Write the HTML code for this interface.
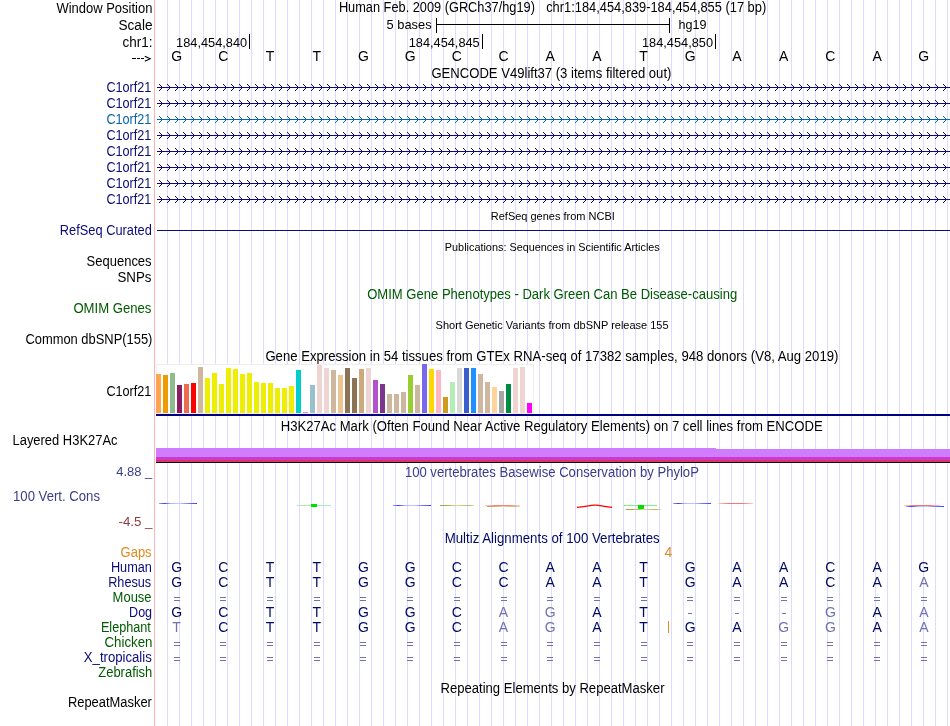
<!DOCTYPE html>
<html><head><meta charset="utf-8"><style>
html,body{margin:0;padding:0;background:#fff;width:950px;height:726px;overflow:hidden}
svg{display:block;will-change:transform}
text{font-family:"Liberation Sans", sans-serif}
</style></head><body>
<svg width="950" height="726" viewBox="0 0 950 726">
<defs><pattern id="chevN" x="154" y="0" width="8" height="7" patternUnits="userSpaceOnUse"><rect x="0" y="3" width="8" height="1" fill="#0c0c78"/><rect x="7" y="2" width="1" height="3" fill="#0c0c78"/><rect x="6" y="1" width="1" height="1" fill="#0c0c78"/><rect x="6" y="5" width="1" height="1" fill="#0c0c78"/><rect x="5" y="0" width="1" height="1" fill="#0c0c78"/><rect x="5" y="6" width="1" height="1" fill="#0c0c78"/></pattern><pattern id="chevB" x="154" y="0" width="8" height="7" patternUnits="userSpaceOnUse"><rect x="0" y="3" width="8" height="1" fill="#0a64a8"/><rect x="7" y="2" width="1" height="3" fill="#0a64a8"/><rect x="6" y="1" width="1" height="1" fill="#0a64a8"/><rect x="6" y="5" width="1" height="1" fill="#0a64a8"/><rect x="5" y="0" width="1" height="1" fill="#0a64a8"/><rect x="5" y="6" width="1" height="1" fill="#0a64a8"/></pattern><linearGradient id="gb1" x1="0" y1="0" x2="1" y2="0"><stop offset="0" stop-color="#a0a0ff"/><stop offset="0.15" stop-color="#3a3aff"/><stop offset="0.3" stop-color="#b0b0ff"/><stop offset="0.55" stop-color="#c8c8ff"/><stop offset="0.8" stop-color="#7070ff"/><stop offset="1" stop-color="#4040ff"/></linearGradient><linearGradient id="gr1" x1="0" y1="0" x2="1" y2="0"><stop offset="0" stop-color="#ffd0d0"/><stop offset="0.3" stop-color="#ff7070"/><stop offset="0.7" stop-color="#ff7070"/><stop offset="1" stop-color="#ffd0d0"/></linearGradient><linearGradient id="go1" x1="0" y1="0" x2="1" y2="0"><stop offset="0" stop-color="#a0a040"/><stop offset="0.2" stop-color="#b0b040"/><stop offset="0.5" stop-color="#d8d8a0"/><stop offset="0.85" stop-color="#b8b860"/><stop offset="1" stop-color="#e0e0b0"/></linearGradient><linearGradient id="gg1" x1="0" y1="0" x2="1" y2="0"><stop offset="0" stop-color="#c0f0c0"/><stop offset="1" stop-color="#b0f0b0"/></linearGradient></defs>
<rect x="0" y="0" width="950" height="726" fill="#fff"/>
<g shape-rendering="crispEdges">
<rect x="167" y="0" width="1" height="726" fill="#dcdcff"/>
<rect x="179" y="0" width="1" height="726" fill="#dcdcff"/>
<rect x="191" y="0" width="1" height="726" fill="#dcdcff"/>
<rect x="203" y="0" width="1" height="726" fill="#dcdcff"/>
<rect x="215" y="0" width="1" height="726" fill="#dcdcff"/>
<rect x="227" y="0" width="1" height="726" fill="#dcdcff"/>
<rect x="239" y="0" width="1" height="726" fill="#dcdcff"/>
<rect x="251" y="0" width="1" height="726" fill="#dcdcff"/>
<rect x="263" y="0" width="1" height="726" fill="#dcdcff"/>
<rect x="275" y="0" width="1" height="726" fill="#dcdcff"/>
<rect x="287" y="0" width="1" height="726" fill="#dcdcff"/>
<rect x="299" y="0" width="1" height="726" fill="#dcdcff"/>
<rect x="311" y="0" width="1" height="726" fill="#dcdcff"/>
<rect x="323" y="0" width="1" height="726" fill="#dcdcff"/>
<rect x="335" y="0" width="1" height="726" fill="#dcdcff"/>
<rect x="347" y="0" width="1" height="726" fill="#dcdcff"/>
<rect x="359" y="0" width="1" height="726" fill="#dcdcff"/>
<rect x="371" y="0" width="1" height="726" fill="#dcdcff"/>
<rect x="383" y="0" width="1" height="726" fill="#dcdcff"/>
<rect x="395" y="0" width="1" height="726" fill="#dcdcff"/>
<rect x="407" y="0" width="1" height="726" fill="#dcdcff"/>
<rect x="419" y="0" width="1" height="726" fill="#dcdcff"/>
<rect x="431" y="0" width="1" height="726" fill="#dcdcff"/>
<rect x="443" y="0" width="1" height="726" fill="#dcdcff"/>
<rect x="455" y="0" width="1" height="726" fill="#dcdcff"/>
<rect x="467" y="0" width="1" height="726" fill="#dcdcff"/>
<rect x="479" y="0" width="1" height="726" fill="#dcdcff"/>
<rect x="491" y="0" width="1" height="726" fill="#dcdcff"/>
<rect x="503" y="0" width="1" height="726" fill="#dcdcff"/>
<rect x="515" y="0" width="1" height="726" fill="#dcdcff"/>
<rect x="527" y="0" width="1" height="726" fill="#dcdcff"/>
<rect x="539" y="0" width="1" height="726" fill="#dcdcff"/>
<rect x="551" y="0" width="1" height="726" fill="#dcdcff"/>
<rect x="563" y="0" width="1" height="726" fill="#dcdcff"/>
<rect x="575" y="0" width="1" height="726" fill="#dcdcff"/>
<rect x="587" y="0" width="1" height="726" fill="#dcdcff"/>
<rect x="599" y="0" width="1" height="726" fill="#dcdcff"/>
<rect x="611" y="0" width="1" height="726" fill="#dcdcff"/>
<rect x="623" y="0" width="1" height="726" fill="#dcdcff"/>
<rect x="635" y="0" width="1" height="726" fill="#dcdcff"/>
<rect x="647" y="0" width="1" height="726" fill="#dcdcff"/>
<rect x="659" y="0" width="1" height="726" fill="#dcdcff"/>
<rect x="671" y="0" width="1" height="726" fill="#dcdcff"/>
<rect x="683" y="0" width="1" height="726" fill="#dcdcff"/>
<rect x="695" y="0" width="1" height="726" fill="#dcdcff"/>
<rect x="707" y="0" width="1" height="726" fill="#dcdcff"/>
<rect x="719" y="0" width="1" height="726" fill="#dcdcff"/>
<rect x="731" y="0" width="1" height="726" fill="#dcdcff"/>
<rect x="743" y="0" width="1" height="726" fill="#dcdcff"/>
<rect x="755" y="0" width="1" height="726" fill="#dcdcff"/>
<rect x="767" y="0" width="1" height="726" fill="#dcdcff"/>
<rect x="779" y="0" width="1" height="726" fill="#dcdcff"/>
<rect x="791" y="0" width="1" height="726" fill="#dcdcff"/>
<rect x="803" y="0" width="1" height="726" fill="#dcdcff"/>
<rect x="815" y="0" width="1" height="726" fill="#dcdcff"/>
<rect x="827" y="0" width="1" height="726" fill="#dcdcff"/>
<rect x="839" y="0" width="1" height="726" fill="#dcdcff"/>
<rect x="851" y="0" width="1" height="726" fill="#dcdcff"/>
<rect x="863" y="0" width="1" height="726" fill="#dcdcff"/>
<rect x="875" y="0" width="1" height="726" fill="#dcdcff"/>
<rect x="887" y="0" width="1" height="726" fill="#dcdcff"/>
<rect x="899" y="0" width="1" height="726" fill="#dcdcff"/>
<rect x="911" y="0" width="1" height="726" fill="#dcdcff"/>
<rect x="923" y="0" width="1" height="726" fill="#dcdcff"/>
<rect x="935" y="0" width="1" height="726" fill="#dcdcff"/>
<rect x="947" y="0" width="1" height="726" fill="#dcdcff"/>
<rect x="154" y="0" width="1" height="726" fill="#ffb4b4"/>
<rect x="436" y="18" width="1" height="15" fill="#000"/>
<rect x="436" y="24" width="234" height="1" fill="#000"/>
<rect x="669" y="18" width="1" height="15" fill="#000"/>
<rect x="249" y="34" width="1" height="15" fill="#000"/>
<rect x="482" y="34" width="1" height="15" fill="#000"/>
<rect x="715" y="34" width="1" height="15" fill="#000"/>
<text x="176.6" y="61" font-size="14" fill="#000" text-anchor="middle">G</text>
<text x="223.3" y="61" font-size="14" fill="#000" text-anchor="middle">C</text>
<text x="270.0" y="61" font-size="14" fill="#000" text-anchor="middle">T</text>
<text x="316.7" y="61" font-size="14" fill="#000" text-anchor="middle">T</text>
<text x="363.4" y="61" font-size="14" fill="#000" text-anchor="middle">G</text>
<text x="410.1" y="61" font-size="14" fill="#000" text-anchor="middle">G</text>
<text x="456.8" y="61" font-size="14" fill="#000" text-anchor="middle">C</text>
<text x="503.5" y="61" font-size="14" fill="#000" text-anchor="middle">C</text>
<text x="550.2" y="61" font-size="14" fill="#000" text-anchor="middle">A</text>
<text x="596.9" y="61" font-size="14" fill="#000" text-anchor="middle">A</text>
<text x="643.6" y="61" font-size="14" fill="#000" text-anchor="middle">T</text>
<text x="690.3" y="61" font-size="14" fill="#000" text-anchor="middle">G</text>
<text x="737.0" y="61" font-size="14" fill="#000" text-anchor="middle">A</text>
<text x="783.7" y="61" font-size="14" fill="#000" text-anchor="middle">A</text>
<text x="830.4" y="61" font-size="14" fill="#000" text-anchor="middle">C</text>
<text x="877.1" y="61" font-size="14" fill="#000" text-anchor="middle">A</text>
<text x="923.8" y="61" font-size="14" fill="#000" text-anchor="middle">G</text>
<g transform="translate(0,84)"><rect x="157" y="0" width="793" height="7" fill="url(#chevN)"/></g>
<g transform="translate(0,100)"><rect x="157" y="0" width="793" height="7" fill="url(#chevN)"/></g>
<g transform="translate(0,116)"><rect x="157" y="0" width="793" height="7" fill="url(#chevB)"/></g>
<g transform="translate(0,132)"><rect x="157" y="0" width="793" height="7" fill="url(#chevN)"/></g>
<g transform="translate(0,148)"><rect x="157" y="0" width="793" height="7" fill="url(#chevN)"/></g>
<g transform="translate(0,164)"><rect x="157" y="0" width="793" height="7" fill="url(#chevN)"/></g>
<g transform="translate(0,180)"><rect x="157" y="0" width="793" height="7" fill="url(#chevN)"/></g>
<g transform="translate(0,196)"><rect x="157" y="0" width="793" height="7" fill="url(#chevN)"/></g>
<rect x="157" y="230" width="793" height="1" fill="#0c0c78"/>
<rect x="156" y="364" width="378" height="50" fill="#eeeeee"/>
<rect x="157" y="365" width="376" height="48" fill="#ffffff"/>
<rect x="156" y="374" width="5" height="39" fill="#FFA54F"/>
<rect x="163" y="375" width="5" height="38" fill="#EE9A00"/>
<rect x="170" y="373" width="5" height="40" fill="#8FBC8F"/>
<rect x="177" y="385" width="5" height="28" fill="#8B1C62"/>
<rect x="184" y="384" width="5" height="29" fill="#EE6A50"/>
<rect x="191" y="383" width="5" height="30" fill="#FF0000"/>
<rect x="198" y="367" width="5" height="46" fill="#CDB79E"/>
<rect x="205" y="378" width="5" height="35" fill="#EEEE00"/>
<rect x="212" y="373" width="5" height="40" fill="#EEEE00"/>
<rect x="219" y="384" width="5" height="29" fill="#EEEE00"/>
<rect x="226" y="368" width="5" height="45" fill="#EEEE00"/>
<rect x="233" y="369" width="5" height="44" fill="#EEEE00"/>
<rect x="240" y="374" width="5" height="39" fill="#EEEE00"/>
<rect x="247" y="373" width="5" height="40" fill="#EEEE00"/>
<rect x="254" y="382" width="5" height="31" fill="#EEEE00"/>
<rect x="261" y="383" width="5" height="30" fill="#EEEE00"/>
<rect x="268" y="383" width="5" height="30" fill="#EEEE00"/>
<rect x="275" y="388" width="5" height="25" fill="#EEEE00"/>
<rect x="282" y="388" width="5" height="25" fill="#EEEE00"/>
<rect x="289" y="386" width="5" height="27" fill="#EEEE00"/>
<rect x="296" y="370" width="5" height="43" fill="#00CDCD"/>
<rect x="303" y="412" width="5" height="1" fill="#EE82EE"/>
<rect x="310" y="385" width="5" height="28" fill="#9AC0CD"/>
<rect x="317" y="365" width="5" height="48" fill="#EED5D2"/>
<rect x="324" y="368" width="5" height="45" fill="#EED5D2"/>
<rect x="331" y="370" width="5" height="43" fill="#CDB79E"/>
<rect x="338" y="375" width="5" height="38" fill="#EEC591"/>
<rect x="345" y="368" width="5" height="45" fill="#8B7355"/>
<rect x="352" y="378" width="5" height="35" fill="#8B7355"/>
<rect x="359" y="369" width="5" height="44" fill="#CDAA7D"/>
<rect x="366" y="368" width="5" height="45" fill="#EED5D2"/>
<rect x="373" y="380" width="5" height="33" fill="#B452CD"/>
<rect x="380" y="384" width="5" height="29" fill="#7A378B"/>
<rect x="387" y="394" width="5" height="19" fill="#CDB79E"/>
<rect x="394" y="394" width="5" height="19" fill="#CDB79E"/>
<rect x="401" y="392" width="5" height="21" fill="#CDB79E"/>
<rect x="408" y="375" width="5" height="38" fill="#9ACD32"/>
<rect x="415" y="385" width="5" height="28" fill="#CDB79E"/>
<rect x="422" y="364" width="5" height="49" fill="#7A67EE"/>
<rect x="429" y="369" width="5" height="44" fill="#FFD700"/>
<rect x="436" y="370" width="5" height="43" fill="#FFB6C1"/>
<rect x="443" y="397" width="5" height="16" fill="#CD9B1D"/>
<rect x="450" y="382" width="5" height="31" fill="#B4EEB4"/>
<rect x="457" y="368" width="5" height="45" fill="#D9D9D9"/>
<rect x="464" y="368" width="5" height="45" fill="#3A5FCD"/>
<rect x="471" y="368" width="5" height="45" fill="#1E90FF"/>
<rect x="478" y="374" width="5" height="39" fill="#CDB79E"/>
<rect x="485" y="382" width="5" height="31" fill="#CDB79E"/>
<rect x="492" y="387" width="5" height="26" fill="#FFD39B"/>
<rect x="499" y="391" width="5" height="22" fill="#A6A6A6"/>
<rect x="506" y="384" width="5" height="29" fill="#008B45"/>
<rect x="513" y="368" width="5" height="45" fill="#EED5D2"/>
<rect x="520" y="367" width="5" height="46" fill="#EED5D2"/>
<rect x="527" y="403" width="5" height="10" fill="#FF00FF"/>
<rect x="156" y="414" width="794" height="2" fill="#000080"/>
<rect x="156" y="448" width="560" height="9" fill="#d07cff"/>
<rect x="716" y="449" width="234" height="8" fill="#d07cff"/>
<rect x="156" y="457" width="794" height="3" fill="#cc3acc"/>
<rect x="156" y="460" width="794" height="2" fill="#d83860"/>
<rect x="156" y="462" width="794" height="1" fill="#100030"/>
<rect x="159" y="503" width="38" height="1.0" fill="url(#gb1)" shape-rendering="auto"/>
<rect x="297" y="505" width="34" height="1.0" fill="#a8f0a8" shape-rendering="auto"/>
<rect x="311" y="504" width="6" height="3" fill="#00e000"/>
<rect x="393" y="505" width="38" height="1.0" fill="url(#gb1)" shape-rendering="auto"/>
<rect x="440" y="505" width="34" height="1.0" fill="url(#go1)" shape-rendering="auto"/>
<rect x="485" y="505" width="35" height="0.9" fill="url(#gr1)" shape-rendering="auto"/>
<rect x="487" y="506" width="33" height="0.9" fill="url(#go1)" shape-rendering="auto"/>
<path d="M577 507.3 C585 507 590 505 595 505.2 C600 505 605 507 612 507.3" stroke="#ff0000" stroke-width="1.3" fill="none" shape-rendering="auto"/>
<rect x="624" y="505" width="33" height="1.0" fill="#80f080" shape-rendering="auto"/>
<rect x="638" y="505" width="6" height="4" fill="#00e000"/>
<rect x="626" y="509" width="35" height="1.0" fill="url(#go1)" shape-rendering="auto"/>
<rect x="673" y="503" width="38" height="1.0" fill="url(#gb1)" shape-rendering="auto"/>
<rect x="718" y="503" width="35" height="1.0" fill="url(#gr1)" shape-rendering="auto"/>
<rect x="904" y="505" width="36" height="1.0" fill="url(#gr1)" shape-rendering="auto"/>
<rect x="906" y="506" width="38" height="1.0" fill="url(#gb1)" shape-rendering="auto"/>
<text x="668.5" y="557" font-size="14" fill="#e08a1e" text-anchor="middle">4</text>
<text x="176.6" y="572" font-size="14" fill="#000a64" text-anchor="middle">G</text>
<text x="223.3" y="572" font-size="14" fill="#000a64" text-anchor="middle">C</text>
<text x="270.0" y="572" font-size="14" fill="#000a64" text-anchor="middle">T</text>
<text x="316.7" y="572" font-size="14" fill="#000a64" text-anchor="middle">T</text>
<text x="363.4" y="572" font-size="14" fill="#000a64" text-anchor="middle">G</text>
<text x="410.1" y="572" font-size="14" fill="#000a64" text-anchor="middle">G</text>
<text x="456.8" y="572" font-size="14" fill="#000a64" text-anchor="middle">C</text>
<text x="503.5" y="572" font-size="14" fill="#000a64" text-anchor="middle">C</text>
<text x="550.2" y="572" font-size="14" fill="#000a64" text-anchor="middle">A</text>
<text x="596.9" y="572" font-size="14" fill="#000a64" text-anchor="middle">A</text>
<text x="643.6" y="572" font-size="14" fill="#000a64" text-anchor="middle">T</text>
<text x="690.3" y="572" font-size="14" fill="#000a64" text-anchor="middle">G</text>
<text x="737.0" y="572" font-size="14" fill="#000a64" text-anchor="middle">A</text>
<text x="783.7" y="572" font-size="14" fill="#000a64" text-anchor="middle">A</text>
<text x="830.4" y="572" font-size="14" fill="#000a64" text-anchor="middle">C</text>
<text x="877.1" y="572" font-size="14" fill="#000a64" text-anchor="middle">A</text>
<text x="923.8" y="572" font-size="14" fill="#000a64" text-anchor="middle">G</text>
<text x="176.6" y="587" font-size="14" fill="#000a64" text-anchor="middle">G</text>
<text x="223.3" y="587" font-size="14" fill="#000a64" text-anchor="middle">C</text>
<text x="270.0" y="587" font-size="14" fill="#000a64" text-anchor="middle">T</text>
<text x="316.7" y="587" font-size="14" fill="#000a64" text-anchor="middle">T</text>
<text x="363.4" y="587" font-size="14" fill="#000a64" text-anchor="middle">G</text>
<text x="410.1" y="587" font-size="14" fill="#000a64" text-anchor="middle">G</text>
<text x="456.8" y="587" font-size="14" fill="#000a64" text-anchor="middle">C</text>
<text x="503.5" y="587" font-size="14" fill="#000a64" text-anchor="middle">C</text>
<text x="550.2" y="587" font-size="14" fill="#000a64" text-anchor="middle">A</text>
<text x="596.9" y="587" font-size="14" fill="#000a64" text-anchor="middle">A</text>
<text x="643.6" y="587" font-size="14" fill="#000a64" text-anchor="middle">T</text>
<text x="690.3" y="587" font-size="14" fill="#000a64" text-anchor="middle">G</text>
<text x="737.0" y="587" font-size="14" fill="#000a64" text-anchor="middle">A</text>
<text x="783.7" y="587" font-size="14" fill="#000a64" text-anchor="middle">A</text>
<text x="830.4" y="587" font-size="14" fill="#000a64" text-anchor="middle">C</text>
<text x="877.1" y="587" font-size="14" fill="#000a64" text-anchor="middle">A</text>
<text x="923.8" y="587" font-size="14" fill="#7272b0" text-anchor="middle">A</text>
<rect x="174" y="597" width="6" height="1" fill="#7272b0"/>
<rect x="174" y="600" width="6" height="1" fill="#7272b0"/>
<rect x="220" y="597" width="6" height="1" fill="#7272b0"/>
<rect x="220" y="600" width="6" height="1" fill="#7272b0"/>
<rect x="267" y="597" width="6" height="1" fill="#7272b0"/>
<rect x="267" y="600" width="6" height="1" fill="#7272b0"/>
<rect x="314" y="597" width="6" height="1" fill="#7272b0"/>
<rect x="314" y="600" width="6" height="1" fill="#7272b0"/>
<rect x="360" y="597" width="6" height="1" fill="#7272b0"/>
<rect x="360" y="600" width="6" height="1" fill="#7272b0"/>
<rect x="407" y="597" width="6" height="1" fill="#7272b0"/>
<rect x="407" y="600" width="6" height="1" fill="#7272b0"/>
<rect x="454" y="597" width="6" height="1" fill="#7272b0"/>
<rect x="454" y="600" width="6" height="1" fill="#7272b0"/>
<rect x="501" y="597" width="6" height="1" fill="#7272b0"/>
<rect x="501" y="600" width="6" height="1" fill="#7272b0"/>
<rect x="547" y="597" width="6" height="1" fill="#7272b0"/>
<rect x="547" y="600" width="6" height="1" fill="#7272b0"/>
<rect x="594" y="597" width="6" height="1" fill="#7272b0"/>
<rect x="594" y="600" width="6" height="1" fill="#7272b0"/>
<rect x="641" y="597" width="6" height="1" fill="#7272b0"/>
<rect x="641" y="600" width="6" height="1" fill="#7272b0"/>
<rect x="687" y="597" width="6" height="1" fill="#7272b0"/>
<rect x="687" y="600" width="6" height="1" fill="#7272b0"/>
<rect x="734" y="597" width="6" height="1" fill="#7272b0"/>
<rect x="734" y="600" width="6" height="1" fill="#7272b0"/>
<rect x="781" y="597" width="6" height="1" fill="#7272b0"/>
<rect x="781" y="600" width="6" height="1" fill="#7272b0"/>
<rect x="827" y="597" width="6" height="1" fill="#7272b0"/>
<rect x="827" y="600" width="6" height="1" fill="#7272b0"/>
<rect x="874" y="597" width="6" height="1" fill="#7272b0"/>
<rect x="874" y="600" width="6" height="1" fill="#7272b0"/>
<rect x="921" y="597" width="6" height="1" fill="#7272b0"/>
<rect x="921" y="600" width="6" height="1" fill="#7272b0"/>
<text x="176.6" y="617" font-size="14" fill="#000a64" text-anchor="middle">G</text>
<text x="223.3" y="617" font-size="14" fill="#000a64" text-anchor="middle">C</text>
<text x="270.0" y="617" font-size="14" fill="#000a64" text-anchor="middle">T</text>
<text x="316.7" y="617" font-size="14" fill="#000a64" text-anchor="middle">T</text>
<text x="363.4" y="617" font-size="14" fill="#000a64" text-anchor="middle">G</text>
<text x="410.1" y="617" font-size="14" fill="#000a64" text-anchor="middle">G</text>
<text x="456.8" y="617" font-size="14" fill="#000a64" text-anchor="middle">C</text>
<text x="503.5" y="617" font-size="14" fill="#7272b0" text-anchor="middle">A</text>
<text x="550.2" y="617" font-size="14" fill="#7272b0" text-anchor="middle">G</text>
<text x="596.9" y="617" font-size="14" fill="#000a64" text-anchor="middle">A</text>
<text x="643.6" y="617" font-size="14" fill="#000a64" text-anchor="middle">T</text>
<rect x="688" y="613" width="4" height="1" fill="#7272b0"/>
<rect x="735" y="613" width="4" height="1" fill="#7272b0"/>
<rect x="782" y="613" width="4" height="1" fill="#7272b0"/>
<text x="830.4" y="617" font-size="14" fill="#7272b0" text-anchor="middle">G</text>
<text x="877.1" y="617" font-size="14" fill="#000a64" text-anchor="middle">A</text>
<text x="923.8" y="617" font-size="14" fill="#7272b0" text-anchor="middle">A</text>
<text x="176.6" y="632" font-size="14" fill="#7272b0" text-anchor="middle">T</text>
<text x="223.3" y="632" font-size="14" fill="#000a64" text-anchor="middle">C</text>
<text x="270.0" y="632" font-size="14" fill="#000a64" text-anchor="middle">T</text>
<text x="316.7" y="632" font-size="14" fill="#000a64" text-anchor="middle">T</text>
<text x="363.4" y="632" font-size="14" fill="#000a64" text-anchor="middle">G</text>
<text x="410.1" y="632" font-size="14" fill="#000a64" text-anchor="middle">G</text>
<text x="456.8" y="632" font-size="14" fill="#000a64" text-anchor="middle">C</text>
<text x="503.5" y="632" font-size="14" fill="#7272b0" text-anchor="middle">A</text>
<text x="550.2" y="632" font-size="14" fill="#7272b0" text-anchor="middle">G</text>
<text x="596.9" y="632" font-size="14" fill="#000a64" text-anchor="middle">A</text>
<text x="643.6" y="632" font-size="14" fill="#000a64" text-anchor="middle">T</text>
<text x="690.3" y="632" font-size="14" fill="#000a64" text-anchor="middle">G</text>
<text x="737.0" y="632" font-size="14" fill="#000a64" text-anchor="middle">A</text>
<text x="783.7" y="632" font-size="14" fill="#7272b0" text-anchor="middle">G</text>
<text x="830.4" y="632" font-size="14" fill="#7272b0" text-anchor="middle">G</text>
<text x="877.1" y="632" font-size="14" fill="#000a64" text-anchor="middle">A</text>
<text x="923.8" y="632" font-size="14" fill="#7272b0" text-anchor="middle">A</text>
<rect x="174" y="642" width="6" height="1" fill="#7272b0"/>
<rect x="174" y="645" width="6" height="1" fill="#7272b0"/>
<rect x="220" y="642" width="6" height="1" fill="#7272b0"/>
<rect x="220" y="645" width="6" height="1" fill="#7272b0"/>
<rect x="267" y="642" width="6" height="1" fill="#7272b0"/>
<rect x="267" y="645" width="6" height="1" fill="#7272b0"/>
<rect x="314" y="642" width="6" height="1" fill="#7272b0"/>
<rect x="314" y="645" width="6" height="1" fill="#7272b0"/>
<rect x="360" y="642" width="6" height="1" fill="#7272b0"/>
<rect x="360" y="645" width="6" height="1" fill="#7272b0"/>
<rect x="407" y="642" width="6" height="1" fill="#7272b0"/>
<rect x="407" y="645" width="6" height="1" fill="#7272b0"/>
<rect x="454" y="642" width="6" height="1" fill="#7272b0"/>
<rect x="454" y="645" width="6" height="1" fill="#7272b0"/>
<rect x="501" y="642" width="6" height="1" fill="#7272b0"/>
<rect x="501" y="645" width="6" height="1" fill="#7272b0"/>
<rect x="547" y="642" width="6" height="1" fill="#7272b0"/>
<rect x="547" y="645" width="6" height="1" fill="#7272b0"/>
<rect x="594" y="642" width="6" height="1" fill="#7272b0"/>
<rect x="594" y="645" width="6" height="1" fill="#7272b0"/>
<rect x="641" y="642" width="6" height="1" fill="#7272b0"/>
<rect x="641" y="645" width="6" height="1" fill="#7272b0"/>
<rect x="687" y="642" width="6" height="1" fill="#7272b0"/>
<rect x="687" y="645" width="6" height="1" fill="#7272b0"/>
<rect x="734" y="642" width="6" height="1" fill="#7272b0"/>
<rect x="734" y="645" width="6" height="1" fill="#7272b0"/>
<rect x="781" y="642" width="6" height="1" fill="#7272b0"/>
<rect x="781" y="645" width="6" height="1" fill="#7272b0"/>
<rect x="827" y="642" width="6" height="1" fill="#7272b0"/>
<rect x="827" y="645" width="6" height="1" fill="#7272b0"/>
<rect x="874" y="642" width="6" height="1" fill="#7272b0"/>
<rect x="874" y="645" width="6" height="1" fill="#7272b0"/>
<rect x="921" y="642" width="6" height="1" fill="#7272b0"/>
<rect x="921" y="645" width="6" height="1" fill="#7272b0"/>
<rect x="174" y="657" width="6" height="1" fill="#7272b0"/>
<rect x="174" y="660" width="6" height="1" fill="#7272b0"/>
<rect x="220" y="657" width="6" height="1" fill="#7272b0"/>
<rect x="220" y="660" width="6" height="1" fill="#7272b0"/>
<rect x="267" y="657" width="6" height="1" fill="#7272b0"/>
<rect x="267" y="660" width="6" height="1" fill="#7272b0"/>
<rect x="314" y="657" width="6" height="1" fill="#7272b0"/>
<rect x="314" y="660" width="6" height="1" fill="#7272b0"/>
<rect x="360" y="657" width="6" height="1" fill="#7272b0"/>
<rect x="360" y="660" width="6" height="1" fill="#7272b0"/>
<rect x="407" y="657" width="6" height="1" fill="#7272b0"/>
<rect x="407" y="660" width="6" height="1" fill="#7272b0"/>
<rect x="454" y="657" width="6" height="1" fill="#7272b0"/>
<rect x="454" y="660" width="6" height="1" fill="#7272b0"/>
<rect x="501" y="657" width="6" height="1" fill="#7272b0"/>
<rect x="501" y="660" width="6" height="1" fill="#7272b0"/>
<rect x="547" y="657" width="6" height="1" fill="#7272b0"/>
<rect x="547" y="660" width="6" height="1" fill="#7272b0"/>
<rect x="594" y="657" width="6" height="1" fill="#7272b0"/>
<rect x="594" y="660" width="6" height="1" fill="#7272b0"/>
<rect x="641" y="657" width="6" height="1" fill="#7272b0"/>
<rect x="641" y="660" width="6" height="1" fill="#7272b0"/>
<rect x="687" y="657" width="6" height="1" fill="#7272b0"/>
<rect x="687" y="660" width="6" height="1" fill="#7272b0"/>
<rect x="734" y="657" width="6" height="1" fill="#7272b0"/>
<rect x="734" y="660" width="6" height="1" fill="#7272b0"/>
<rect x="781" y="657" width="6" height="1" fill="#7272b0"/>
<rect x="781" y="660" width="6" height="1" fill="#7272b0"/>
<rect x="827" y="657" width="6" height="1" fill="#7272b0"/>
<rect x="827" y="660" width="6" height="1" fill="#7272b0"/>
<rect x="874" y="657" width="6" height="1" fill="#7272b0"/>
<rect x="874" y="660" width="6" height="1" fill="#7272b0"/>
<rect x="921" y="657" width="6" height="1" fill="#7272b0"/>
<rect x="921" y="660" width="6" height="1" fill="#7272b0"/>
<rect x="668" y="621" width="1" height="12" fill="#e08a1e"/>
<text x="56.40" y="13" font-size="14" fill="#000" textLength="96.00" lengthAdjust="spacingAndGlyphs">Window Position</text>
<text x="338.90" y="12" font-size="14" fill="#000" textLength="196.00" lengthAdjust="spacingAndGlyphs">Human Feb. 2009 (GRCh37/hg19)</text>
<text x="546.20" y="12" font-size="14" fill="#000" textLength="220.00" lengthAdjust="spacingAndGlyphs">chr1:184,454,839-184,454,855 (17 bp)</text>
<text x="118.50" y="30" font-size="14" fill="#000" textLength="34.00" lengthAdjust="spacingAndGlyphs">Scale</text>
<text x="386.60" y="29" font-size="13" fill="#000" textLength="45.00" lengthAdjust="spacingAndGlyphs">5 bases</text>
<text x="678.60" y="29" font-size="13" fill="#000" textLength="28.00" lengthAdjust="spacingAndGlyphs">hg19</text>
<text x="122.40" y="47" font-size="14" fill="#000" textLength="30.00" lengthAdjust="spacingAndGlyphs">chr1:</text>
<text x="176.10" y="47" font-size="13" fill="#000" textLength="71.00" lengthAdjust="spacingAndGlyphs">184,454,840</text>
<text x="408.70" y="47" font-size="13" fill="#000" textLength="71.00" lengthAdjust="spacingAndGlyphs">184,454,845</text>
<text x="642.00" y="47" font-size="13" fill="#000" textLength="71.00" lengthAdjust="spacingAndGlyphs">184,454,850</text>
<text x="431.40" y="78" font-size="14" fill="#000" textLength="240.00" lengthAdjust="spacingAndGlyphs">GENCODE V49lift37 (3 items filtered out)</text>
<text x="106.40" y="92" font-size="14" fill="#0c0c78" textLength="45.00" lengthAdjust="spacingAndGlyphs">C1orf21</text>
<text x="106.40" y="108" font-size="14" fill="#0c0c78" textLength="45.00" lengthAdjust="spacingAndGlyphs">C1orf21</text>
<text x="106.40" y="124" font-size="14" fill="#0a64a8" textLength="45.00" lengthAdjust="spacingAndGlyphs">C1orf21</text>
<text x="106.40" y="140" font-size="14" fill="#0c0c78" textLength="45.00" lengthAdjust="spacingAndGlyphs">C1orf21</text>
<text x="106.40" y="156" font-size="14" fill="#0c0c78" textLength="45.00" lengthAdjust="spacingAndGlyphs">C1orf21</text>
<text x="106.40" y="172" font-size="14" fill="#0c0c78" textLength="45.00" lengthAdjust="spacingAndGlyphs">C1orf21</text>
<text x="106.40" y="188" font-size="14" fill="#0c0c78" textLength="45.00" lengthAdjust="spacingAndGlyphs">C1orf21</text>
<text x="106.40" y="204" font-size="14" fill="#0c0c78" textLength="45.00" lengthAdjust="spacingAndGlyphs">C1orf21</text>
<text x="490.80" y="220" font-size="11.5" fill="#000" textLength="124.00" lengthAdjust="spacingAndGlyphs">RefSeq genes from NCBI</text>
<text x="59.80" y="235" font-size="14" fill="#0c0c78" textLength="92.00" lengthAdjust="spacingAndGlyphs">RefSeq Curated</text>
<text x="444.80" y="251" font-size="11.5" fill="#000" textLength="215.00" lengthAdjust="spacingAndGlyphs">Publications: Sequences in Scientific Articles</text>
<text x="86.60" y="266" font-size="14" fill="#000" textLength="65.00" lengthAdjust="spacingAndGlyphs">Sequences</text>
<text x="117.50" y="282" font-size="14" fill="#000" textLength="34.00" lengthAdjust="spacingAndGlyphs">SNPs</text>
<text x="367.20" y="299" font-size="14" fill="#005a00" textLength="370.00" lengthAdjust="spacingAndGlyphs">OMIM Gene Phenotypes - Dark Green Can Be Disease-causing</text>
<text x="73.40" y="313" font-size="14" fill="#005a00" textLength="78.00" lengthAdjust="spacingAndGlyphs">OMIM Genes</text>
<text x="435.60" y="329" font-size="11.5" fill="#000" textLength="233.00" lengthAdjust="spacingAndGlyphs">Short Genetic Variants from dbSNP release 155</text>
<text x="25.40" y="344" font-size="14" fill="#000" textLength="127.00" lengthAdjust="spacingAndGlyphs">Common dbSNP(155)</text>
<text x="265.40" y="361" font-size="14" fill="#000" textLength="573.00" lengthAdjust="spacingAndGlyphs">Gene Expression in 54 tissues from GTEx RNA-seq of 17382 samples, 948 donors (V8, Aug 2019)</text>
<text x="106.40" y="396" font-size="14" fill="#000" textLength="45.00" lengthAdjust="spacingAndGlyphs">C1orf21</text>
<text x="280.70" y="431" font-size="14" fill="#000" textLength="542.00" lengthAdjust="spacingAndGlyphs">H3K27Ac Mark (Often Found Near Active Regulatory Elements) on 7 cell lines from ENCODE</text>
<text x="12.50" y="445" font-size="14" fill="#000" textLength="105.00" lengthAdjust="spacingAndGlyphs">Layered H3K27Ac</text>
<text x="116.30" y="476" font-size="13" fill="#3c3c8c" textLength="36.00" lengthAdjust="spacingAndGlyphs">4.88 _</text>
<text x="404.90" y="477" font-size="14" fill="#3c3c8c" textLength="294.00" lengthAdjust="spacingAndGlyphs">100 vertebrates Basewise Conservation by PhyloP</text>
<text x="13.00" y="501" font-size="14" fill="#3c3c8c" textLength="87.00" lengthAdjust="spacingAndGlyphs">100 Vert. Cons</text>
<text x="118.50" y="526" font-size="13" fill="#8c3c3c" textLength="34.00" lengthAdjust="spacingAndGlyphs">-4.5 _</text>
<text x="444.70" y="543" font-size="14" fill="#000a64" textLength="215.00" lengthAdjust="spacingAndGlyphs">Multiz Alignments of 100 Vertebrates</text>
<text x="120.60" y="557" font-size="14" fill="#e08a1e" textLength="31.00" lengthAdjust="spacingAndGlyphs">Gaps</text>
<text x="110.90" y="572" font-size="14" fill="#0c0c78" textLength="41.00" lengthAdjust="spacingAndGlyphs">Human</text>
<text x="108.20" y="587" font-size="14" fill="#0c0c78" textLength="43.00" lengthAdjust="spacingAndGlyphs">Rhesus</text>
<text x="112.60" y="602" font-size="14" fill="#005a00" textLength="39.00" lengthAdjust="spacingAndGlyphs">Mouse</text>
<text x="129.10" y="617" font-size="14" fill="#0c0c78" textLength="23.00" lengthAdjust="spacingAndGlyphs">Dog</text>
<text x="100.90" y="632" font-size="14" fill="#005a00" textLength="50.00" lengthAdjust="spacingAndGlyphs">Elephant</text>
<text x="104.50" y="647" font-size="14" fill="#005a00" textLength="48.00" lengthAdjust="spacingAndGlyphs">Chicken</text>
<text x="83.80" y="662" font-size="14" fill="#0c0c78" textLength="68.00" lengthAdjust="spacingAndGlyphs">X_tropicalis</text>
<text x="98.30" y="677" font-size="14" fill="#005a00" textLength="54.00" lengthAdjust="spacingAndGlyphs">Zebrafish</text>
<text x="440.50" y="693" font-size="14" fill="#000" textLength="224.00" lengthAdjust="spacingAndGlyphs">Repeating Elements by RepeatMasker</text>
<text x="67.90" y="707" font-size="14" fill="#000" textLength="84.00" lengthAdjust="spacingAndGlyphs">RepeatMasker</text>
<rect x="132" y="58" width="4" height="1" fill="#000"/>
<rect x="137" y="58" width="3" height="1" fill="#000"/>
<rect x="141" y="58" width="3" height="1" fill="#000"/>
<path d="M144.8 56.2 L150.2 58.7 L144.8 61.2" stroke="#000" stroke-width="1.1" fill="none" shape-rendering="auto"/>
</g>
</svg>
</body></html>
